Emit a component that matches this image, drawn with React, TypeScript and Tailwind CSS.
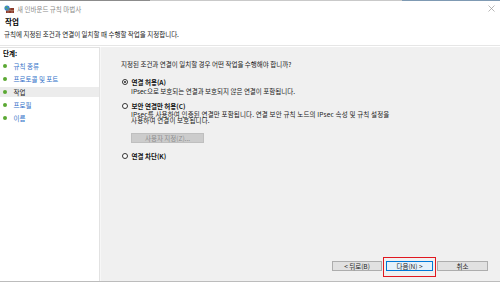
import React from "react";

const Radio = ({ checked }: { checked?: boolean }) => (
  <span className="w-[6px] h-[6px] rounded-full border border-[#333] bg-white flex items-center justify-center shrink-0">
    {checked && <span className="w-[2.5px] h-[2.5px] rounded-full bg-[#222]" />}
  </span>
);

const Bullet = () => (
  <span className="w-[3.5px] h-[3.5px] rounded-full bg-[#5aa832] shrink-0" />
);

const steps = [
  { label: "규칙 종류", active: false },
  { label: "프로토콜 및 포트", active: false },
  { label: "작업", active: true },
  { label: "프로필", active: false },
  { label: "이름", active: false },
];

export default function App() {
  return (
    <div className="w-[500px] h-[282px] bg-white overflow-hidden flex flex-col font-['Noto_Sans_CJK_KR','Noto_Sans',sans-serif] text-[6.5px] text-[#1a1a1a]">
      {/* top strip */}
      <div className="h-[1px] flex shrink-0">
        <div className="w-[150px] bg-[#8c8c8c]" />
        <div className="w-[252px] bg-[#c9c9c9]" />
        <div className="flex-1 bg-[#7f9ab3]" />
      </div>
      {/* title bar */}
      <div className="h-[15px] flex items-center pl-[4px] pr-[5px] shrink-0">
        <svg width="10" height="8" viewBox="0 0 10 8">
          <rect x="2" y="3" width="8" height="5" fill="#8b3a2a" />
          <line x1="2" y1="5.5" x2="10" y2="5.5" stroke="#c9a08a" strokeWidth="0.5" />
          <line x1="6" y1="3" x2="6" y2="5.5" stroke="#c9a08a" strokeWidth="0.5" />
          <line x1="4" y1="5.5" x2="4" y2="8" stroke="#c9a08a" strokeWidth="0.5" />
          <line x1="8" y1="5.5" x2="8" y2="8" stroke="#c9a08a" strokeWidth="0.5" />
          <circle cx="3" cy="3" r="2.6" fill="#3a86d0" />
          <path d="M1.2 2.2 Q2.5 1 3.5 2 Q3 3.4 1.8 3.6 Z" fill="#5cb045" />
          <path d="M3.6 3.2 Q4.8 3 5 4 Q4 5 3.5 4.5 Z" fill="#5cb045" />
        </svg>
        <span className="ml-[3px] text-[#8a8a8a] leading-[8px]">새 인바운드 규칙 마법사</span>
        <div className="flex-1" />
        <svg width="7" height="7" viewBox="0 0 7 7">
          <path d="M0.5 0.5 L6.5 6.5 M6.5 0.5 L0.5 6.5" stroke="#9a9a9a" strokeWidth="0.7" />
        </svg>
      </div>
      {/* header */}
      <div className="h-[29px] pl-[5px] shrink-0 flex flex-col">
        <div className="h-[10px] mt-[1px] leading-[10px] text-[7.5px] font-bold text-black">작업</div>
        <div className="h-[8px] mt-[3px] leading-[8px] -ml-[1px] text-[#222]">
          규칙에 지정된 조건과 연결이 일치할 때 수행할 작업을 지정합니다.
        </div>
      </div>
      <div className="h-[1px] bg-[#e6e6e6] shrink-0" />
      <div className="h-[1px] bg-white shrink-0" />
      {/* body */}
      <div className="flex-1 flex min-h-0">
        <div className="w-[100px] bg-white border-r border-t border-[#e2e2e2] flex flex-col">
          <div className="h-[8px] leading-[8px] pl-[3px] mt-[1px] font-bold text-black">단계:</div>
          <div className="flex flex-col gap-[3px] mt-[4px]">
            {steps.map((s) => (
              <div
                key={s.label}
                className={`h-[10px] flex items-center pl-[3px] ${s.active ? "bg-[#ececec]" : ""}`}
              >
                <Bullet />
                <span
                  className={`ml-[7px] leading-[8px] ${s.active ? "text-[#222]" : "text-[#2f6fc8]"}`}
                >
                  {s.label}
                </span>
              </div>
            ))}
          </div>
        </div>
        <div className="w-[1px] bg-[#f7f7f7]" />
        <div className="flex-1 bg-[#f0f0f0] flex flex-col pl-[20px] pr-[12px] pt-[13px] pb-[10px]">
          <div className="h-[8px] leading-[8px]">지정된 조건과 연결이 일치할 경우 어떤 작업을 수행해야 합니까?</div>

          <div className="h-[8px] mt-[10px] flex items-center pl-[1px]">
            <Radio checked />
            <span className="ml-[3.5px] leading-[8px] font-bold text-[#111]">연결 허용(A)</span>
          </div>
          <div className="h-[7px] leading-[7px] mt-[2px] pl-[10px]">
            IPsec으로 보호되는 연결과 보호되지 않은 연결이 포함됩니다.
          </div>

          <div className="h-[8px] mt-[6.5px] flex items-center pl-[1px]">
            <Radio />
            <span className="ml-[3.5px] leading-[8px] font-bold text-[#111]">보안 연결만 허용(C)</span>
          </div>
          <div className="leading-[6px] mt-[1px] pl-[10px] w-[340px] tracking-[0.15px]">
            IPsec를 사용하여 인증된 연결만 포함됩니다. 연결 보안 규칙 노드의 IPsec 속성 및 규칙 설정을
            <br />
            사용하여 연결이 보호됩니다.
          </div>
          <div className="mt-[10.5px] ml-[10px] w-[73px] h-[10px] bg-[#cccccc] border border-[#bfbfbf] flex items-center justify-center text-[#8d8d8d] leading-[8px]">
            사용자 지정(Z)...
          </div>

          <div className="h-[8px] mt-[8.5px] flex items-center pl-[1px]">
            <Radio />
            <span className="ml-[3.5px] leading-[8px] font-bold text-[#111]">연결 차단(K)</span>
          </div>

          <div className="flex-1" />
          <div className="flex justify-end items-center gap-[4px]">
            <div className="w-[50px] h-[10px] bg-[#e1e1e1] border border-[#adadad] flex items-center justify-center leading-[8px]">
              &lt; 뒤로(B)
            </div>
            <div className="relative">
              <div className="w-[47px] h-[10px] bg-[#e5f1fb] border border-[#0078d7] flex items-center justify-center leading-[8px]">
                다음(N) &gt;
              </div>
              <div className="absolute -left-[3px] -right-[3px] -top-[4.5px] -bottom-[5.5px] border-[1.5px] border-[#e0181f]" />
            </div>
            <div className="w-[51px] h-[10px] bg-[#e1e1e1] border border-[#adadad] flex items-center justify-center leading-[8px]">
              취소
            </div>
          </div>
        </div>
      </div>
      <div className="h-[1px] bg-[#bcbcbc] shrink-0" />
    </div>
  );
}
